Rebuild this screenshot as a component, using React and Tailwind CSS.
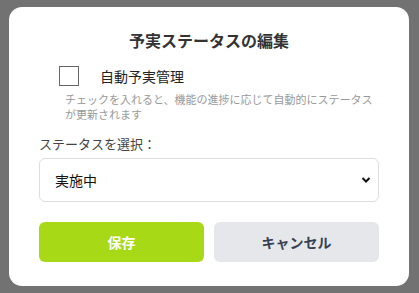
import React, { useState } from "react";

const App = () => {
  const [auto, setAuto] = useState(false);
  const [status, setStatus] = useState("実施中");

  return (
    <div
      className="w-[419px] h-[293px] bg-[#727272] pt-[7px] pl-[9px] overflow-hidden"
      style={{ fontFamily: '"Noto Sans CJK JP", "Noto Sans", sans-serif' }}
    >
      <div className="w-[400px] h-[279px] bg-white rounded-[13px] px-[30px] pt-[21px]">
        <h2 className="text-[16px] leading-[24px] font-bold text-[#333] text-center">
          予実ステータスの編集
        </h2>

        <label className="mt-[14px] ml-[20px] flex items-center h-[20px] cursor-pointer">
          <input
            type="checkbox"
            checked={auto}
            onChange={() => setAuto(!auto)}
            className="appearance-none w-[20px] h-[20px] border border-[#666] bg-white m-0"
          />
          <span className="ml-[21px] text-[14px] leading-[20px] text-[#222]">
            自動予実管理
          </span>
        </label>

        <p className="mt-[6px] ml-[26px] text-[11px] leading-[15px] text-[#999]">
          チェックを入れると、機能の進捗に応じて自動的にステータスが更新されます
        </p>

        <p className="mt-[12px] text-[13px] leading-[20px] text-[#444]">
          ステータスを選択：
        </p>

        <div className="mt-[4px] relative">
          <select
            value={status}
            onChange={(e) => setStatus(e.target.value)}
            className="appearance-none w-full h-[44px] border border-[#ddd] rounded-[6px] pl-[15px] pr-8 text-[14px] text-[#111] bg-white outline-none"
          >
            <option>未着手</option>
            <option>実施中</option>
            <option>完了</option>
          </select>
          <svg
            className="absolute right-[8px] top-[18px] pointer-events-none"
            width="10"
            height="8"
            viewBox="0 0 10 8"
          >
            <path d="M1.5 2 L5 5.5 L8.5 2" fill="none" stroke="#111" strokeWidth="2" />
          </svg>
        </div>

        <div className="mt-[20px] flex gap-[10px]">
          <button className="flex-1 h-[40px] rounded-[6px] bg-[#a7d917] text-white text-[14px] font-bold">
            保存
          </button>
          <button className="flex-1 h-[40px] rounded-[6px] bg-[#e5e7eb] text-[#374151] text-[14px] font-bold">
            キャンセル
          </button>
        </div>
      </div>
    </div>
  );
};

export default App;
